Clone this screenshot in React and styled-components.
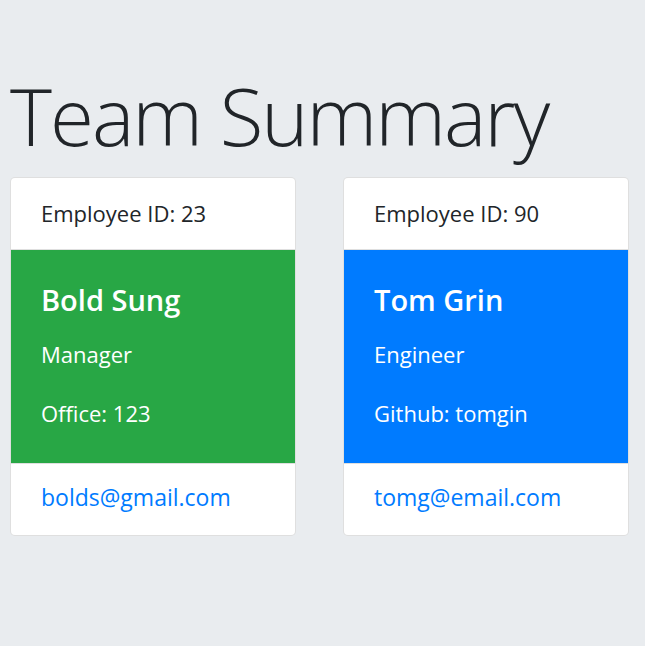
import React from 'react';
import styled, {createGlobalStyle} from 'styled-components';

const GlobalStyle = createGlobalStyle`
  body {
    margin: 0;
    background: #e9ecef;
    font-family: "Open Sans", "Noto Sans", sans-serif;
    color: #212529;
  }
`

const team = [
    {id: 23, name: "Bold Sung", role: "Manager", extra: "Office: 123", email: "bolds@gmail.com", color: "#28a745"},
    {id: 90, name: "Tom Grin", role: "Engineer", extra: "Github: tomgin", email: "tomg@email.com", color: "#007bff"},
]

export default function App() {
    return (
        <>
            <GlobalStyle/>
            <Page>
                <Title>Team Summary</Title>
                <CardRow>
                    {team.map((member) => (
                        <Card key={member.id}>
                            <CardHeader>Employee ID: {member.id}</CardHeader>
                            <CardBody $bg={member.color}>
                                <Name>{member.name}</Name>
                                <Info>{member.role}</Info>
                                <Info>{member.extra}</Info>
                            </CardBody>
                            <CardFooter>
                                <Email href={`mailto:${member.email}`}>{member.email}</Email>
                            </CardFooter>
                        </Card>
                    ))}
                </CardRow>
            </Page>
        </>
    );
}

const Page = styled.div`
  min-height: 646px;
  padding: 67px 0 0 10px;
  box-sizing: border-box;
`

const Title = styled.h1`
  margin: 0 0 14px 0;
  height: 96px;
  font-size: 80px;
  font-weight: 300;
  line-height: 96px;
  letter-spacing: -2px;
`

const CardRow = styled.div`
  display: flex;
  gap: 47px;
`

const Card = styled.div`
  width: 286px;
  background: #fff;
  border: 1px solid rgba(0, 0, 0, .125);
  border-radius: 5px;
  overflow: hidden;
  box-sizing: border-box;
`

const CardHeader = styled.div`
  height: 72px;
  padding: 0 30px;
  display: flex;
  align-items: center;
  font-size: 22px;
  line-height: 1.5;
  border-bottom: 1px solid rgba(0, 0, 0, .125);
  box-sizing: border-box;
`

const CardBody = styled.div`
  height: 213px;
  padding: 31px 30px 0;
  background: ${p => p.$bg};
  color: #fff;
  box-sizing: border-box;
`

const Name = styled.h4`
  margin: 0 0 19px;
  font-size: 29px;
  font-weight: 600;
  line-height: 1.3;
`

const Info = styled.p`
  margin: 0 0 26px;
  font-size: 22px;
  line-height: 1.5;
`

const CardFooter = styled.div`
  height: 72px;
  padding: 0 30px 4px;
  display: flex;
  align-items: center;
  border-top: 1px solid rgba(0, 0, 0, .125);
  box-sizing: border-box;
`

const Email = styled.a`
  color: #007bff;
  font-size: 23px;
  line-height: 1.5;
  text-decoration: none;
`
